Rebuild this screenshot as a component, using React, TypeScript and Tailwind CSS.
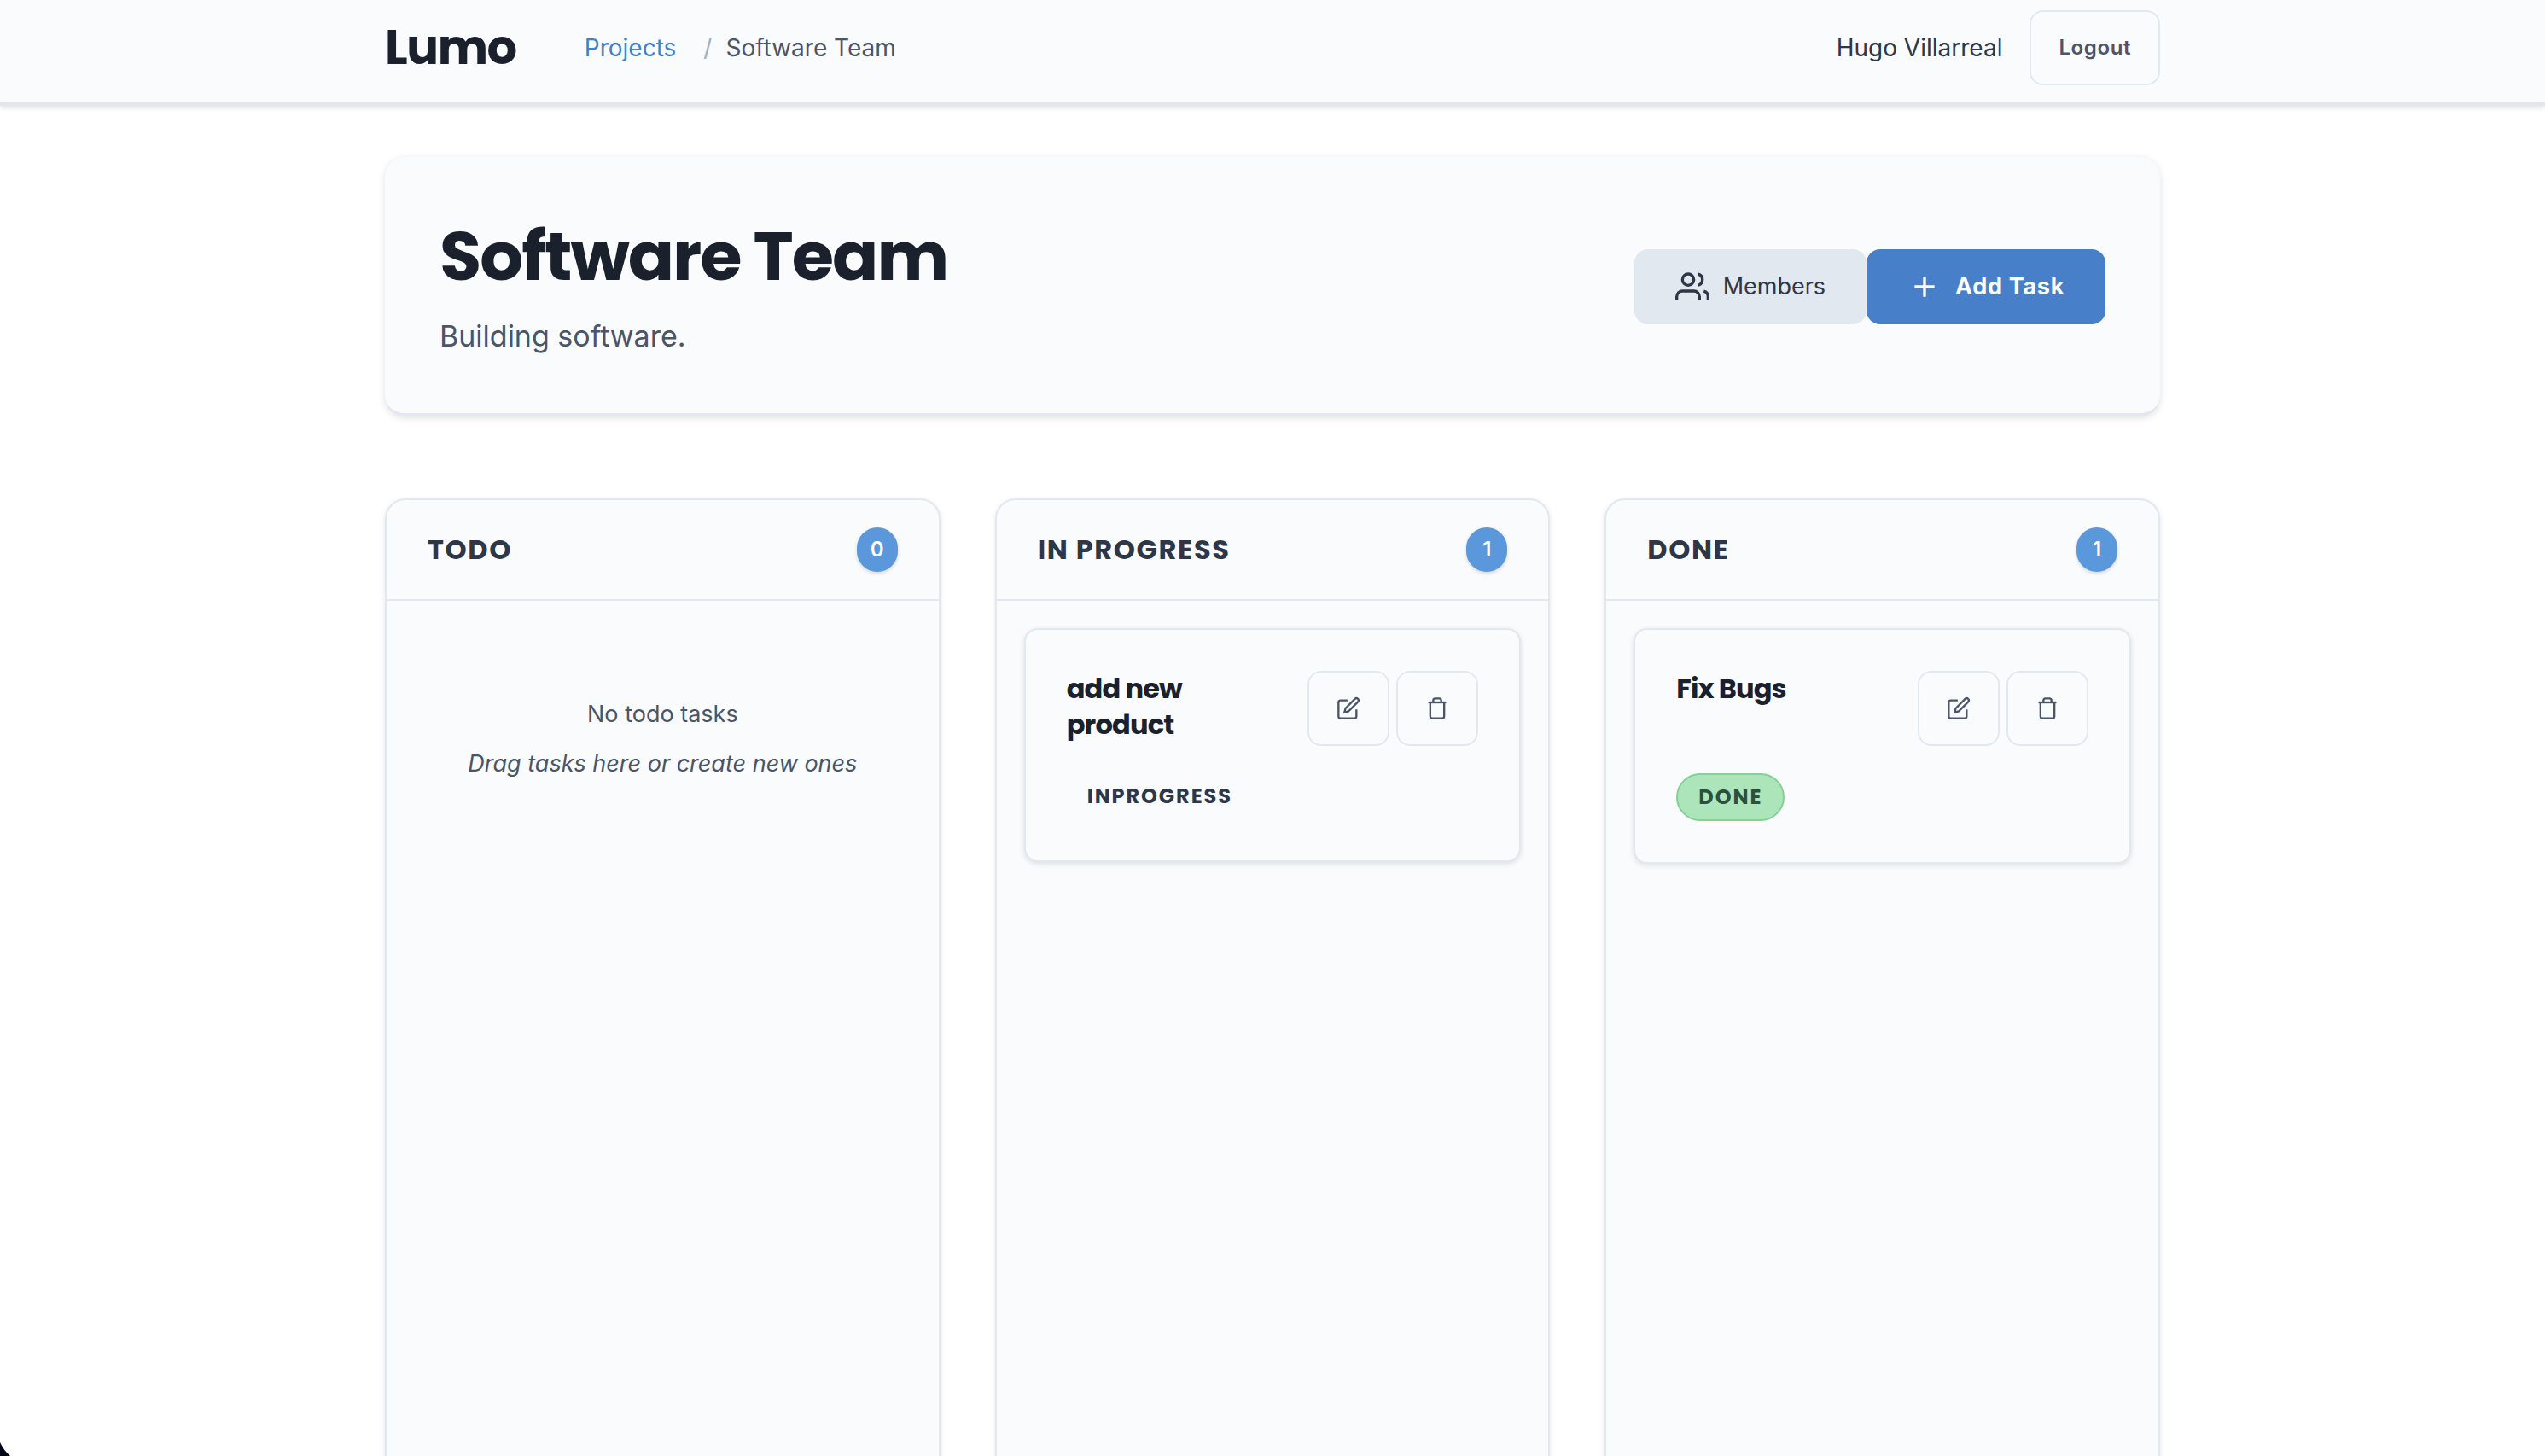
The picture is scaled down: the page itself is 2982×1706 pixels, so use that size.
import React from "react";

const iconProps = {
  viewBox: "0 0 24 24",
  fill: "none",
  stroke: "currentColor",
  "aria-hidden": true,
} as const;

function UsersIcon() {
  return (
    <svg {...iconProps} strokeWidth={2} className="size-10 shrink-0">
      <path d="M17 21v-2a4 4 0 0 0-4-4H5a4 4 0 0 0-4 4v2" />
      <circle cx="9" cy="7" r="4" />
      <path d="M23 21v-2a4 4 0 0 0-3-3.87" />
      <path d="M16 3.13a4 4 0 0 1 0 7.75" />
    </svg>
  );
}

function PlusIcon() {
  return (
    <svg {...iconProps} strokeWidth={2} className="size-10 shrink-0">
      <path d="M12 5v14M5 12h14" />
    </svg>
  );
}

function EditIcon() {
  return (
    <svg {...iconProps} strokeWidth={2} className="size-7">
      <path d="M11 4H4a2 2 0 0 0-2 2v14a2 2 0 0 0 2 2h14a2 2 0 0 0 2-2v-7" />
      <path d="M18.5 2.5a2.121 2.121 0 0 1 3 3L12 15l-4 1 1-4 9.5-9.5z" />
    </svg>
  );
}

function TrashIcon() {
  return (
    <svg {...iconProps} strokeWidth={2} className="size-7">
      <path d="M3 6h18" />
      <path d="M19 6v14a2 2 0 0 1-2 2H7a2 2 0 0 1-2-2V6m3 0V4a2 2 0 0 1 2-2h4a2 2 0 0 1 2 2v2" />
    </svg>
  );
}

const headingFont = "font-[Poppins,Inter,sans-serif]";

function IconButton({ label, children }: { label: string; children: React.ReactNode }) {
  return (
    <button
      type="button"
      aria-label={label}
      className="flex h-[88px] w-24 items-center justify-center rounded-2xl border-2 border-[#e2e8f0] text-[#4a5568]"
    >
      {children}
    </button>
  );
}

type Task = { title: string; status: string; done: boolean };

function TaskCard({ task }: { task: Task }) {
  return (
    <article className="rounded-2xl border-2 border-[#e2e8f0] bg-[#fafbfd] p-12 shadow-[0_2px_6px_rgba(0,0,0,0.12)]">
      <div className="mb-8 flex items-start justify-between gap-4">
        <h3 className={`${headingFont} max-w-44 text-[32px] leading-[42px] font-bold tracking-tight text-[#1a202c]`}>
          {task.title}
        </h3>
        <div className="flex gap-2">
          <IconButton label={`Edit ${task.title}`}>
            <EditIcon />
          </IconButton>
          <IconButton label={`Delete ${task.title}`}>
            <TrashIcon />
          </IconButton>
        </div>
      </div>
      {task.done ? (
        <span className={`${headingFont} flex h-14 w-fit items-center rounded-full border-2 border-[#84d195] bg-[#abe5b9] px-6 text-[24px] font-bold tracking-[0.08em] text-[#2b513c]`}>
          {task.status}
        </span>
      ) : (
        <span className={`${headingFont} flex h-[54px] w-fit items-center px-6 text-[24px] font-bold tracking-[0.08em] text-[#2d3748]`}>
          {task.status}
        </span>
      )}
    </article>
  );
}

function Column({ title, tasks }: { title: string; tasks: Task[] }) {
  return (
    <section className="flex min-h-[1400px] flex-col rounded-3xl border-2 border-[#e2e8f0] bg-[#fafbfd] shadow-[0_2px_6px_rgba(0,0,0,0.1)]">
      <header className="flex items-center justify-between border-b-2 border-[#e2e8f0] px-12 py-8">
        <h2 className={`${headingFont} text-[32px] leading-[42px] font-bold tracking-wider text-[#2d3748]`}>{title}</h2>
        <span className="flex h-[52px] w-12 items-center justify-center rounded-full bg-[#5a97db] text-[24px] font-semibold text-white shadow-[0_2px_4px_rgba(0,0,0,0.15)]">
          {tasks.length}
        </span>
      </header>
      <div className="flex flex-col gap-6 p-8">
        {tasks.length === 0 ? (
          <div className="flex flex-col gap-4 py-20 text-center text-[27px] leading-[42px] text-[#4a5568]">
            <p>No todo tasks</p>
            <p className="italic">Drag tasks here or create new ones</p>
          </div>
        ) : (
          tasks.map((task) => <TaskCard key={task.title} task={task} />)
        )}
      </div>
    </section>
  );
}

const columns: { title: string; tasks: Task[] }[] = [
  { title: "TODO", tasks: [] },
  { title: "IN PROGRESS", tasks: [{ title: "add new product", status: "INPROGRESS", done: false }] },
  { title: "DONE", tasks: [{ title: "Fix Bugs", status: "DONE", done: true }] },
];

export default function App() {
  return (
    <div className="relative h-screen overflow-hidden bg-white font-[Inter,sans-serif] text-[28px] text-[#2d3748]">
      <nav className="border-b-4 border-[#e3e6eb] bg-[#fafbfd] shadow-[0_2px_6px_rgba(0,0,0,0.12)]">
        <div className="mx-auto flex h-[120px] max-w-[2080px] items-center justify-between">
          <div className="flex items-center gap-20 pb-2">
            <a href="#home" className={`${headingFont} text-[56px] leading-[72px] font-bold tracking-tight text-[#1a202c]`}>
              Lumo
            </a>
            <ol className="flex items-center gap-4" aria-label="Breadcrumb">
              <li>
                <a href="#projects" className="text-[#4380cb]">Projects</a>
              </li>
              <li className="ml-4 text-[#a0aec0]" aria-hidden="true">/</li>
              <li className="text-[#4a5568]">Software Team</li>
            </ol>
          </div>
          <div className="flex items-center gap-8 pb-2">
            <span>Hugo Villarreal</span>
            <button
              type="button"
              className="h-[88px] rounded-2xl border-2 border-[#e2e8f0] px-8 text-[24px] font-semibold tracking-wide text-[#4a5568]"
            >
              Logout
            </button>
          </div>
        </div>
      </nav>

      <main className="mx-auto max-w-[2080px] pt-[60px]">
        <header className="mb-24 flex items-center justify-between rounded-3xl border-b-4 border-[#e2e8f0] bg-[#fafbfd] px-16 pt-[66px] pb-[62px] shadow-[0_2px_8px_rgba(0,0,0,0.12)]">
          <div>
            <h1 className={`${headingFont} text-[80px] leading-[100px] font-bold tracking-tight text-[#1a202c]`}>
              Software Team
            </h1>
            <p className="mt-4 text-[34px] leading-[56px] text-[#4a5568]">Building software.</p>
          </div>
          <div className="flex">
            <button type="button" className="flex h-[88px] items-center gap-4 rounded-2xl bg-[#e2e8f0] px-12 text-[27px] text-[#2d3748]">
              <UsersIcon />
              Members
            </button>
            <button type="button" className="flex h-[88px] items-center gap-4 rounded-2xl bg-[#4780c8] px-12 text-[27px] font-bold tracking-wide text-white">
              <PlusIcon />
              Add Task
            </button>
          </div>
        </header>

        <div className="grid grid-cols-3 gap-16">
          {columns.map((column) => (
            <Column key={column.title} title={column.title} tasks={column.tasks} />
          ))}
        </div>
      </main>

      <svg viewBox="0 0 12 16" fill="#020617" aria-hidden="true" className="absolute bottom-0 left-0 h-4 w-3">
        <path d="M0 0Q4 9 12 16H0Z" />
      </svg>
    </div>
  );
}
